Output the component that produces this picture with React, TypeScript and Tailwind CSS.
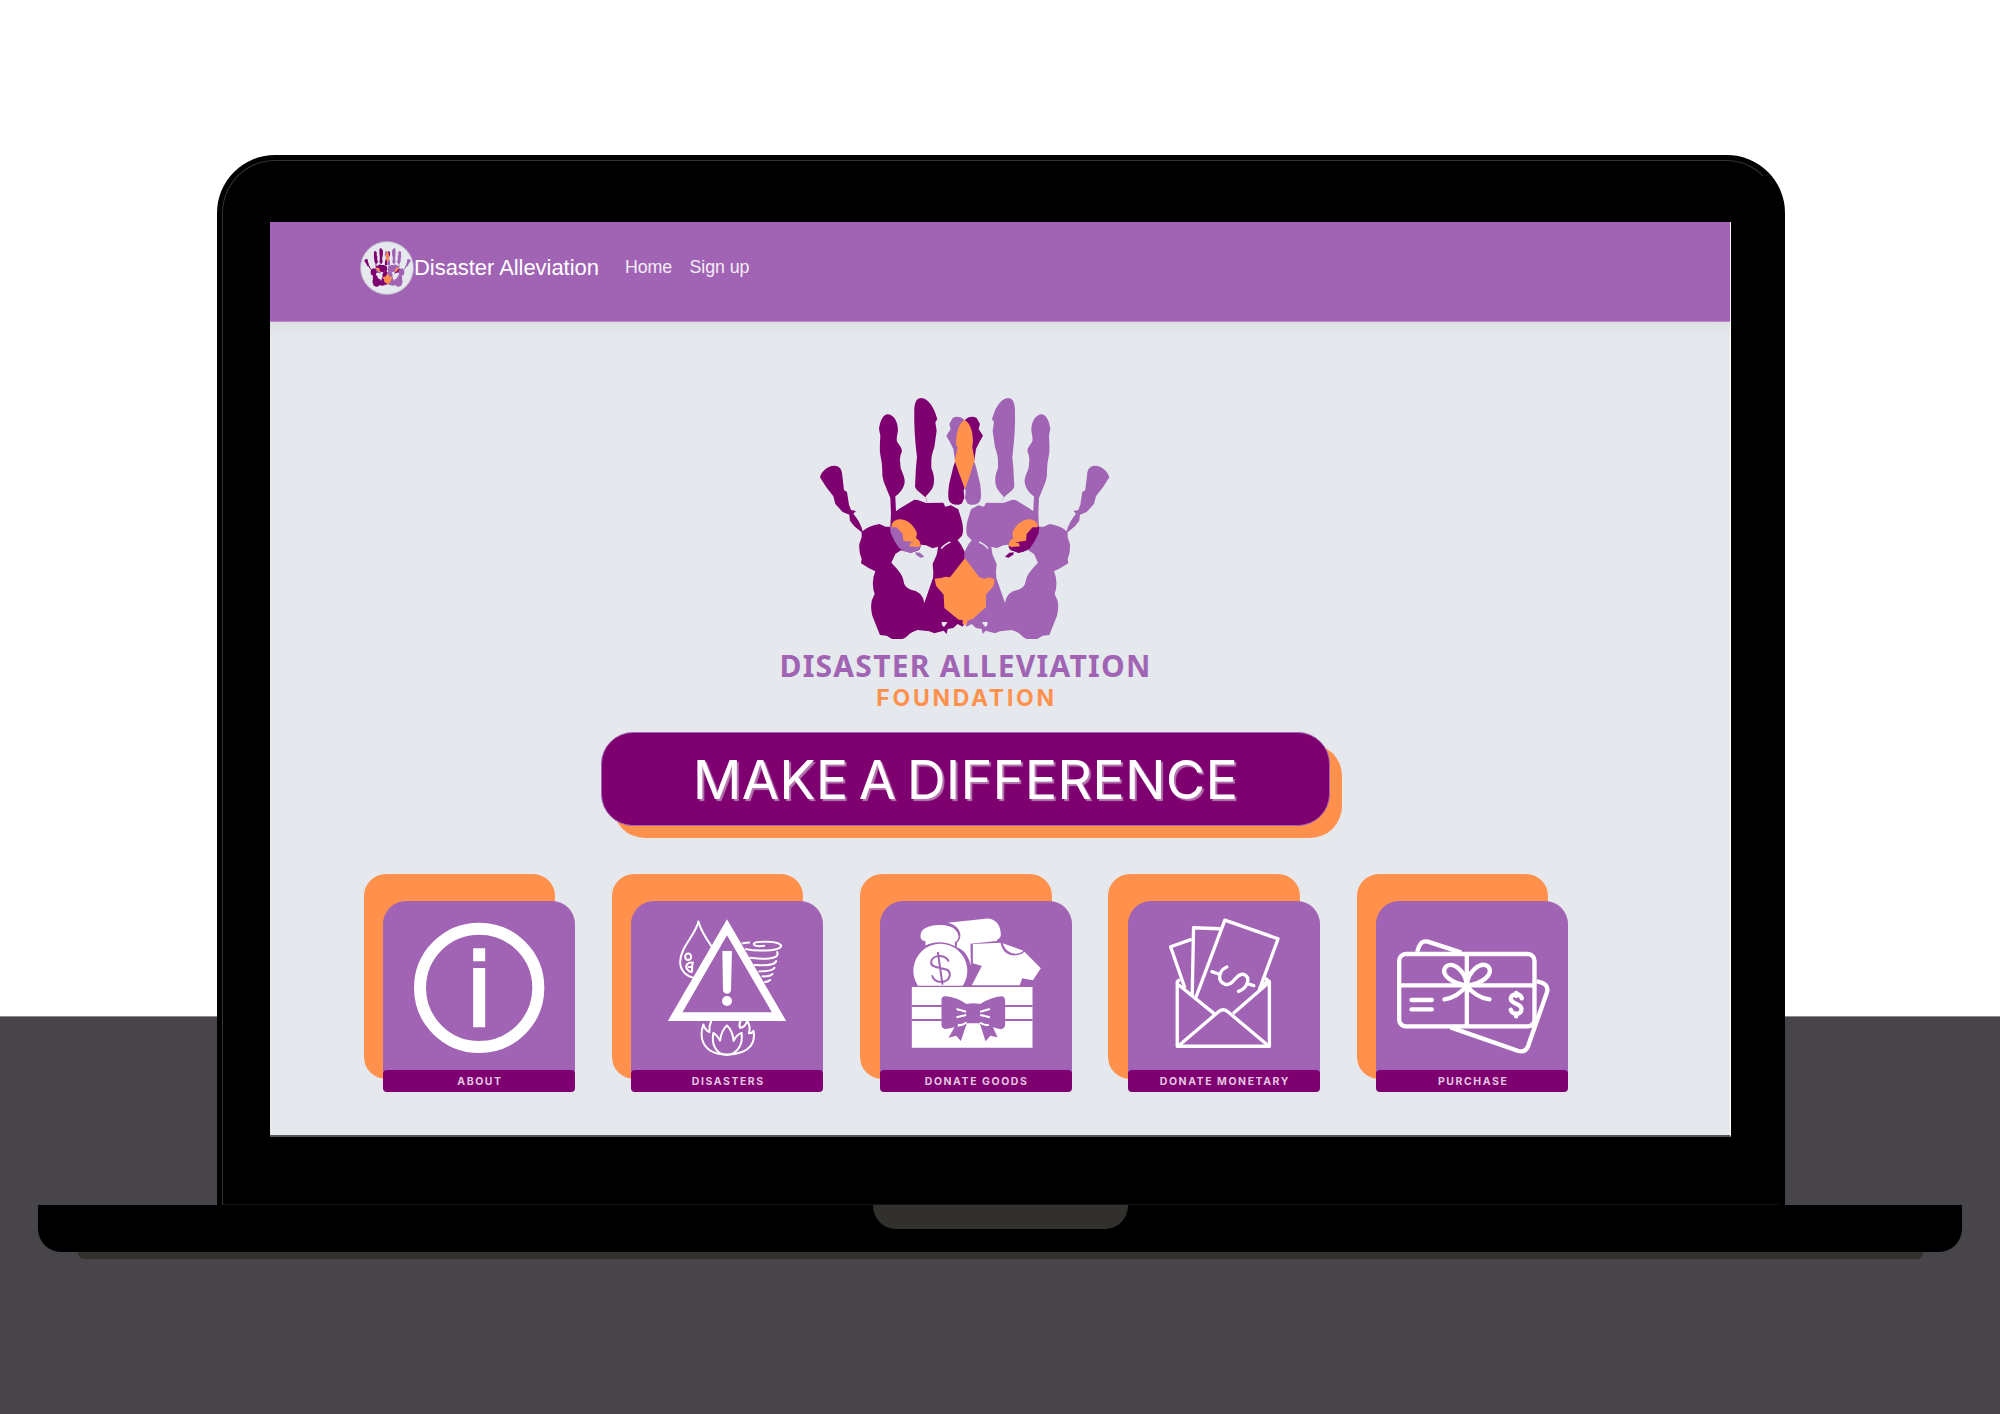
import React from "react";

const DARK = "#7e0070";
const LIGHT = "#a164b4";
const ORANGE = "#ff914d";

function HandShape({ main, other }: { main: string; other: string }) {
  return (
    <g fill={main}>
      <path d="M62 290C66 272 84 256 105 255C122 255 128 268 129 285L134 328L143 334L149 372L155 388L170 391L162 399Q184 425 190 452Q206 436 240 430Q250 434 258 438L273 438L275 400L273 352L262 325Q252 305 249 285Q250 250 243 222Q240 212 243 165L239 145C243 115 255 100 266 101C285 103 296 125 296 150C292 170 290 182 296 187C305 200 309 205 307 215Q301 225 302 240L304 262C310 280 317 290 316 305C313 325 300 340 288 347L290 392L300 384L345 357L355 358L380 367L432 366L438 378L455 374L477 386L486 415C493 440 492 455 488 465L475 479L484 490L497 515L497 725L490 738L475 730L462 742L445 745L442 760L433 750L405 758L390 752L355 748Q340 752 330 760Q318 773 308 775L278 775L262 765L242 763L232 738L219 705Q213 685 217 660L226 640Q214 605 228 572L208 562L185 548L187 535Q178 515 180 490L187 470L187 455L165 437L152 420L150 402L130 394L108 370L102 347L80 318Z" />
      <path d="M345 85C347 62 352 52 366 52C385 54 400 75 407 95L414 115L408 125L412 150L405 200Q396 225 396 240V262Q406 285 404 305C402 330 385 338 378 350C370 340 352 332 347 318L350 260L353 230Q343 150 345 85Z" />
      <path d="M497 118C505 108 520 105 532 112L542 130L538 145L551 165L540 185L530 205L525 240L497 250Z" />
      <path d="M462 258L470 235L500 310L493 330L495 352L488 368C478 375 462 374 452 365C445 355 446 335 450 308Z" />
      <path d="M378 345L384 366" stroke={main} strokeWidth="1.5" opacity=".5" />
      <path
        fill="#e5e8ec"
        d="M365 492L380 494L400 503L416 498L413 520L400 550L402 575L401 592L375 667Q370 632 335 627Q315 622 312 598Q310 580 276 546L288 520L305 509L335 516L360 508Z"
      />
      <path fill="#e5e8ec" d="M427 724L444 724L441 730L434 739L428 734Z" />
      <path d="M426 504Q434 492 453 484" fill="none" stroke="#e5e8ec" strokeWidth="5" />
      <path
        fill={other}
        d="M272 438L300 430L350 485L365 498L358 508L335 517L320 513L300 503L285 480L274 457ZM348 515L362 516L375 528L364 531L350 522Z"
      />
      <path
        fill={ORANGE}
        d="M277 430C283 418 300 413 315 418C335 425 347 442 353 458L350 472L360 480L365 495L355 499L330 497L334 487L345 485L312 480L310 460L292 440L277 440Z"
      />
    </g>
  );
}

function Hands({ className }: { className?: string }) {
  return (
    <svg viewBox="56 46 880 736" preserveAspectRatio="none" className={className}>
      <HandShape main={DARK} other={LIGHT} />
      <g transform="translate(992 0) scale(-1 1)">
        <HandShape main={LIGHT} other={DARK} />
      </g>
      <path
        fill={ORANGE}
        d="M495 118C480 128 471 150 470 190L475 202L466 240L480 280L497 325L510 290L526 238L519 200L521 180C520 150 512 125 495 118Z"
      />
      <path
        fill={ORANGE}
        d="M497 533L540 590L555 594L570 590L586 596L583 615L560 642L560 680L520 715L505 720L502 733L490 730L490 718L478 717L435 682L433 642L410 615L406 594L425 592L438 588L452 590Z"
      />
    </svg>
  );
}

function InfoIcon() {
  return (
    <svg viewBox="100 123 573 507" className="h-[169px] w-full">
      <circle cx="387" cy="383.500" r="177.500" fill="none" stroke="#fff" strokeWidth="36" />
      <path fill="#fff" d="M369 265H405V304H369ZM369 324H405V502H369Z" />
    </svg>
  );
}

function DisasterIcon() {
  return (
    <svg viewBox="844 123 578 507" className="h-[169px] w-full">
      <g fill="none" stroke="#fff" strokeWidth="6" strokeLinecap="round" strokeLinejoin="round">
        <path d="M1086 258C1070 235 1054 212 1047 184C1040 222 992 262 992 305C992 330 1008 348 1032 353" />
        <ellipse cx="1016" cy="290" rx="9" ry="10" />
        <path d="M1031 308C1014 305 1006 317 1013 327Q1017 335 1026 336M1029 309L1028 322M1018 321H1028V334" />
        <path d="M1200 247L1180 249M1245 257C1225 261 1212 256 1214 250C1220 242 1290 242 1296 256C1296 274 1220 274 1190 267" />
        <path d="M1284 276C1295 300 1235 297 1203 293M1281 303C1276 318 1240 316 1216 315M1276 323C1266 337 1245 332 1230 334M1270 342Q1262 350 1240 349M1263 360Q1256 366 1247 366" />
        <path d="M1085 485Q1079 498 1080 517Q1067 511 1062 494C1050 525 1052 582 1132 585C1212 582 1218 540 1213 513Q1207 522 1199 520Q1205 500 1194 483Q1188 502 1172 504Q1168 493 1174 483" />
        <path d="M1132 585C1100 585 1085 553 1092 519Q1105 527 1112 542Q1117 510 1133 497Q1150 513 1153 543Q1162 524 1177 519C1182 555 1163 585 1132 585Z" />
      </g>
      <path fill="#a164b4" d="M1133 195L1292 473H975Z" />
      <path fill="#fff" fillRule="evenodd" d="M1133 177L1311 483H955ZM1133 225L999 457H1268Z" />
      <path fill="#fff" d="M1119 273H1148L1145 390Q1144 401 1133 401Q1121 400 1121 390Z" />
      <circle cx="1133" cy="423" r="15" fill="#fff" />
    </svg>
  );
}

function GoodsIcon() {
  return (
    <svg viewBox="120 123 573 507" className="h-[169px] w-full">
      <g fill="#fff">
        <path d="M322 188L435 176C465 174 480 196 481 222C482 237 470 236 469 243L390 251L391 318C385 290 370 268 348 262L350 246Q362 236 359 220Q352 195 322 188Z" />
        <path
          d="M253 260V246C237 243 233 226 243 211C262 188 325 187 345 207C360 222 360 238 345 248L346 262Q296 237 253 260Z"
          stroke="#a164b4"
          strokeWidth="4"
        />
        <path d="M232 377A81 81 0 1 1 367 377Z" />
        <path d="M397 252L480 248C488 290 528 295 552 275L601 325L577 361L545 355L538 376H394L424 318L397 310Z" />
        <path d="M487 250L549 272C528 290 495 280 487 250Z" />
        <path d="M214 381H576V563H214Z" />
      </g>
      <g fill="none" stroke="#a164b4" strokeWidth="6">
        <path d="M214 438H576M214 480H576" />
        <path d="M324 305C322 284 275 280 272 306C269 332 330 315 328 344C326 374 276 371 275 346M292 276L306 374" />
      </g>
      <path
        fill="#a164b4"
        d="M303 416Q306 407 318 409Q350 413 378 432Q397 427 419 432Q450 412 484 409Q494 410 494 425V492Q494 505 482 508Q455 503 420 487Q432 499 456 499L471 532L450 527L435 544L418 490H379L361 543L347 527L324 533L344 499Q364 503 377 487Q350 503 316 507Q303 506 303 495Z"
      />
      <path
        d="M348 447L377 455M348 472L377 465M448 447L419 455M448 472L419 465M352 494Q368 497 378 487M445 494Q428 497 419 487"
        fill="none"
        stroke="#fff"
        strokeWidth="6"
      />
    </svg>
  );
}

function MoneyIcon() {
  return (
    <svg viewBox="865 123 577 507" className="h-[169px] w-full">
      <g fill="none" stroke="#fff" strokeWidth="10" strokeLinejoin="round">
        <path d="M1056 238L993 260L1036 384M1142 206L1062 203L1058 406" />
        <path d="M1069 412L1156 180L1316 236L1259 391" />
        <path d="M1021 359L1013 365V559H1290V365L1277 354" />
        <path d="M1013 371L1124 461M1290 366L1181 461M1283 363L1262 388M1018 557L1135 457Q1151 442 1167 457L1286 557" />
        <path
          d="M1117 335L1138 342M1162 321C1139 330 1130 363 1157 373C1183 380 1187 338 1213 343C1235 352 1225 384 1197 394M1224 371L1243 377"
          strokeLinecap="round"
        />
      </g>
    </svg>
  );
}

function GiftCardIcon() {
  return (
    <svg viewBox="140 123 573 507" className="h-[169px] w-full">
      <g fill="none" stroke="#fff" strokeWidth="13" strokeLinecap="round" strokeLinejoin="round">
        <rect x="208" y="282" width="406" height="217" rx="20" />
        <path d="M411 282V499M208 376H614" strokeLinecap="butt" />
        <path
          d="M262 276L267 261Q275 240 294 245L395 278M620 364Q660 370 651 398L594 560Q586 578 566 573L362 502"
          strokeLinecap="butt"
        />
        <path d="M411 376C408 335 372 304 349 319C326 345 372 372 411 376C414 335 452 303 474 319C497 342 452 374 411 376C395 398 370 414 344 418M411 376C428 402 455 414 479 418" />
        <path d="M245 420H306M245 448H306M576 415C570 396 542 400 543 417C545 434 574 428 575 447C575 466 547 467 543 449M559 399V408M559 460V469" />
      </g>
    </svg>
  );
}

const cards = [
  { label: "ABOUT", icon: <InfoIcon /> },
  { label: "DISASTERS", icon: <DisasterIcon /> },
  { label: "DONATE GOODS", icon: <GoodsIcon /> },
  { label: "DONATE MONETARY", icon: <MoneyIcon /> },
  { label: "PURCHASE", icon: <GiftCardIcon /> },
];

function Card({ label, icon }: { label: string; icon: React.ReactNode }) {
  return (
    <button className="relative block h-[219px] w-[211px] pl-[19.500px] pt-[27px] text-left">
      <span className="absolute left-0 top-0 h-[205.500px] w-[191.500px] rounded-[22px] bg-[#ff914d]" />
      <span className="relative block h-[191px] w-[192px]">
        <span className="block h-[173px] rounded-t-[23px] bg-[#a164b4]">{icon}</span>
        <span className="-mt-[4px] flex h-[22px] items-center justify-center rounded-[4px] bg-[#7e0070] pl-[2px] pt-[1px] font-['Inter'] text-[10.500px] font-bold leading-none tracking-[1.550px] text-[#e3c6e1]">
          {label}
        </span>
      </span>
    </button>
  );
}

export default function App() {
  return (
    <div className="h-[1414px] w-[2000px] overflow-hidden bg-[linear-gradient(to_bottom,#ffffff_1016px,#8d8b8f_1016px,#8d8b8f_1017px,#48454a_1017px)] pt-[155px] font-['Liberation_Sans',sans-serif]">
      <div className="ml-[217px] h-[1050px] w-[1567.500px] rounded-t-[58px] bg-black pl-[5px] pt-[5px]">
        <div className="h-[1044.500px] w-[1557px] rounded-t-[53px] border border-[#333] border-b-[#151515] border-r-transparent pl-[47px] pt-[61px]">
          <div className="h-[914.500px] w-[1461px] border-b-2 border-b-[#55555a] border-r border-r-white bg-[#e5e8ec]">
            <nav className="flex h-[99.500px] items-center border-b border-[#b98bc8] bg-[#a164b4] pb-[7px] pl-[90px] text-white shadow-[0_4px_14px_rgba(0,0,0,0.06)]">
              <span className="flex size-[54px] items-center justify-center rounded-full border border-[#b9a6c2] bg-[#e5e8ec]">
                <Hands className="h-[39px] w-[47px]" />
              </span>
              <a className="whitespace-nowrap text-[22px] tracking-[-0.050px]">Disaster Alleviation</a>
              <a className="ml-[26px] text-[17.800px] tracking-[-0.080px] text-[#f4edf6]">Home</a>
              <a className="ml-[17.500px] text-[17.800px] tracking-[-0.080px] text-[#f4edf6]">Sign up</a>
            </nav>
            <main className="flex flex-col">
              <div className="flex w-[1390px] flex-col items-center pt-[74px]">
                <Hands className="h-[245.300px] w-[293.300px]" />
                <h1 className="mt-[7px] whitespace-nowrap pl-px font-['Noto_Sans'] text-[30px] font-bold leading-[36px] tracking-[1.250px] text-[#a164b4]">
                  DISASTER ALLEVIATION
                </h1>
                <h2 className="mt-[1.500px] whitespace-nowrap pl-[3px] font-['Inter'] text-[23px] font-bold leading-[26px] tracking-[2.700px] text-[#ff914d]">
                  FOUNDATION
                </h2>
              </div>
              <button className="ml-[331px] mt-[20.500px] flex h-[94px] w-[729px] items-center justify-center rounded-[32px] border border-[#a164b4] bg-[#7e0070] pt-[2px] font-['Inter'] text-[54px] leading-none text-white shadow-[12px_12px_0_#ff914d] [text-shadow:2px_2px_1px_#b678ae]">
                <span className="whitespace-nowrap tracking-[0.200px] [word-spacing:-5px]">MAKE A DIFFERENCE</span>
              </button>
              <div className="ml-[93.500px] mt-[48px] flex gap-[37.300px]">
                {cards.map((card) => (
                  <Card key={card.label} {...card} />
                ))}
              </div>
            </main>
          </div>
        </div>
      </div>
      <div className="ml-[38px] flex h-[47px] w-[1924px] justify-center rounded-b-[23px] bg-black">
        <div className="ml-[1px] h-[24px] w-[255.500px] rounded-b-[23px] bg-[#32302c]" />
      </div>
      <div className="ml-[78px] h-[7px] w-[1845px] rounded-b-[6px] bg-[#32302c]" />
    </div>
  );
}
